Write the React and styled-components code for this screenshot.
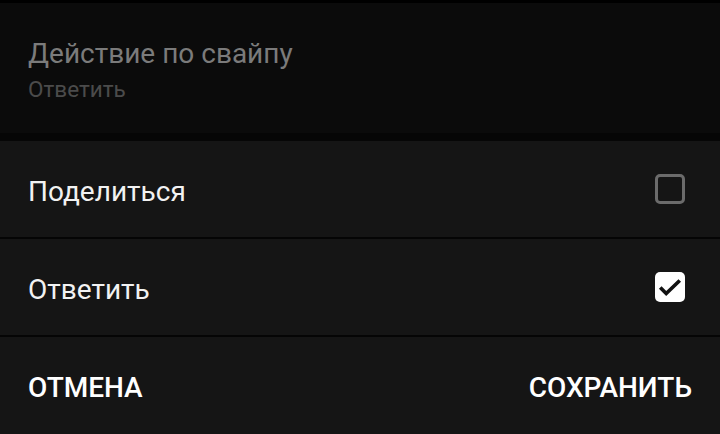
import React from 'react';
import styled, { createGlobalStyle } from 'styled-components';

const GlobalStyle = createGlobalStyle`
  html, body {
    margin: 0;
    padding: 0;
    background: #0b0b0b;
    font-family: 'Roboto', 'Noto Sans', sans-serif;
  }
`;

const Screen = styled.div`
  width: 720px;
  height: 434px;
  overflow: hidden;
  display: flex;
  flex-direction: column;
  background: #0b0b0b;
`;

const Preference = styled.div`
  height: 133px;
  box-sizing: border-box;
  padding: 34px 28px 0;
  border-top: 3px solid #000;
`;

const PrefTitle = styled.div`
  font-size: 28px;
  color: #7b7b7b;
  line-height: 34px;
`;

const PrefSummary = styled.div`
  font-size: 22.5px;
  color: #4b4b4b;
  line-height: 26px;
  margin-top: 5px;
`;

const Scrim = styled.div`
  height: 8px;
  background: #060606;
`;

const Dialog = styled.div`
  flex: 1;
  background: #151515;
  display: flex;
  flex-direction: column;
`;

const Option = styled.label`
  height: 98px;
  box-sizing: border-box;
  display: flex;
  align-items: center;
  justify-content: space-between;
  padding: 0 35px 0 28px;
  border-bottom: 2px solid #050505;
  font-size: 28px;
  color: #f2f2f2;
`;

const OptionText = styled.span`
  padding-top: 4px;
`;

const Box = styled.span`
  width: 30px;
  height: 30px;
  box-sizing: border-box;
  border-radius: 5px;
  display: flex;
  align-items: center;
  justify-content: center;
  border: ${(p) => (p.checked ? 'none' : '3px solid #6b6b6b')};
  background: ${(p) => (p.checked ? '#ffffff' : 'transparent')};
`;

const Actions = styled.div`
  flex: 1;
  display: flex;
  align-items: center;
  justify-content: space-between;
  padding: 4px 28px 0 28px;
`;

const ActionButton = styled.button`
  background: none;
  border: none;
  padding: 0;
  font-family: inherit;
  font-size: 28px;
  font-weight: 500;
  color: #ffffff;
  text-transform: uppercase;
`;

const options = [
  { label: 'Поделиться', checked: false },
  { label: 'Ответить', checked: true },
];

export default function App() {
  return (
    <Screen>
      <GlobalStyle />
      <Preference>
        <PrefTitle>Действие по свайпу</PrefTitle>
        <PrefSummary>Ответить</PrefSummary>
      </Preference>
      <Scrim />
      <Dialog>
        {options.map((o) => (
          <Option key={o.label}>
            <OptionText>{o.label}</OptionText>
            <Box checked={o.checked}>
              {o.checked && (
                <svg width="26" height="26" viewBox="0 0 24 24">
                  <path d="M3 12.5l5.5 5.5L21 6" fill="none" stroke="#111" strokeWidth="3.4" />
                </svg>
              )}
            </Box>
          </Option>
        ))}
        <Actions>
          <ActionButton>Отмена</ActionButton>
          <ActionButton>Сохранить</ActionButton>
        </Actions>
      </Dialog>
    </Screen>
  );
}
